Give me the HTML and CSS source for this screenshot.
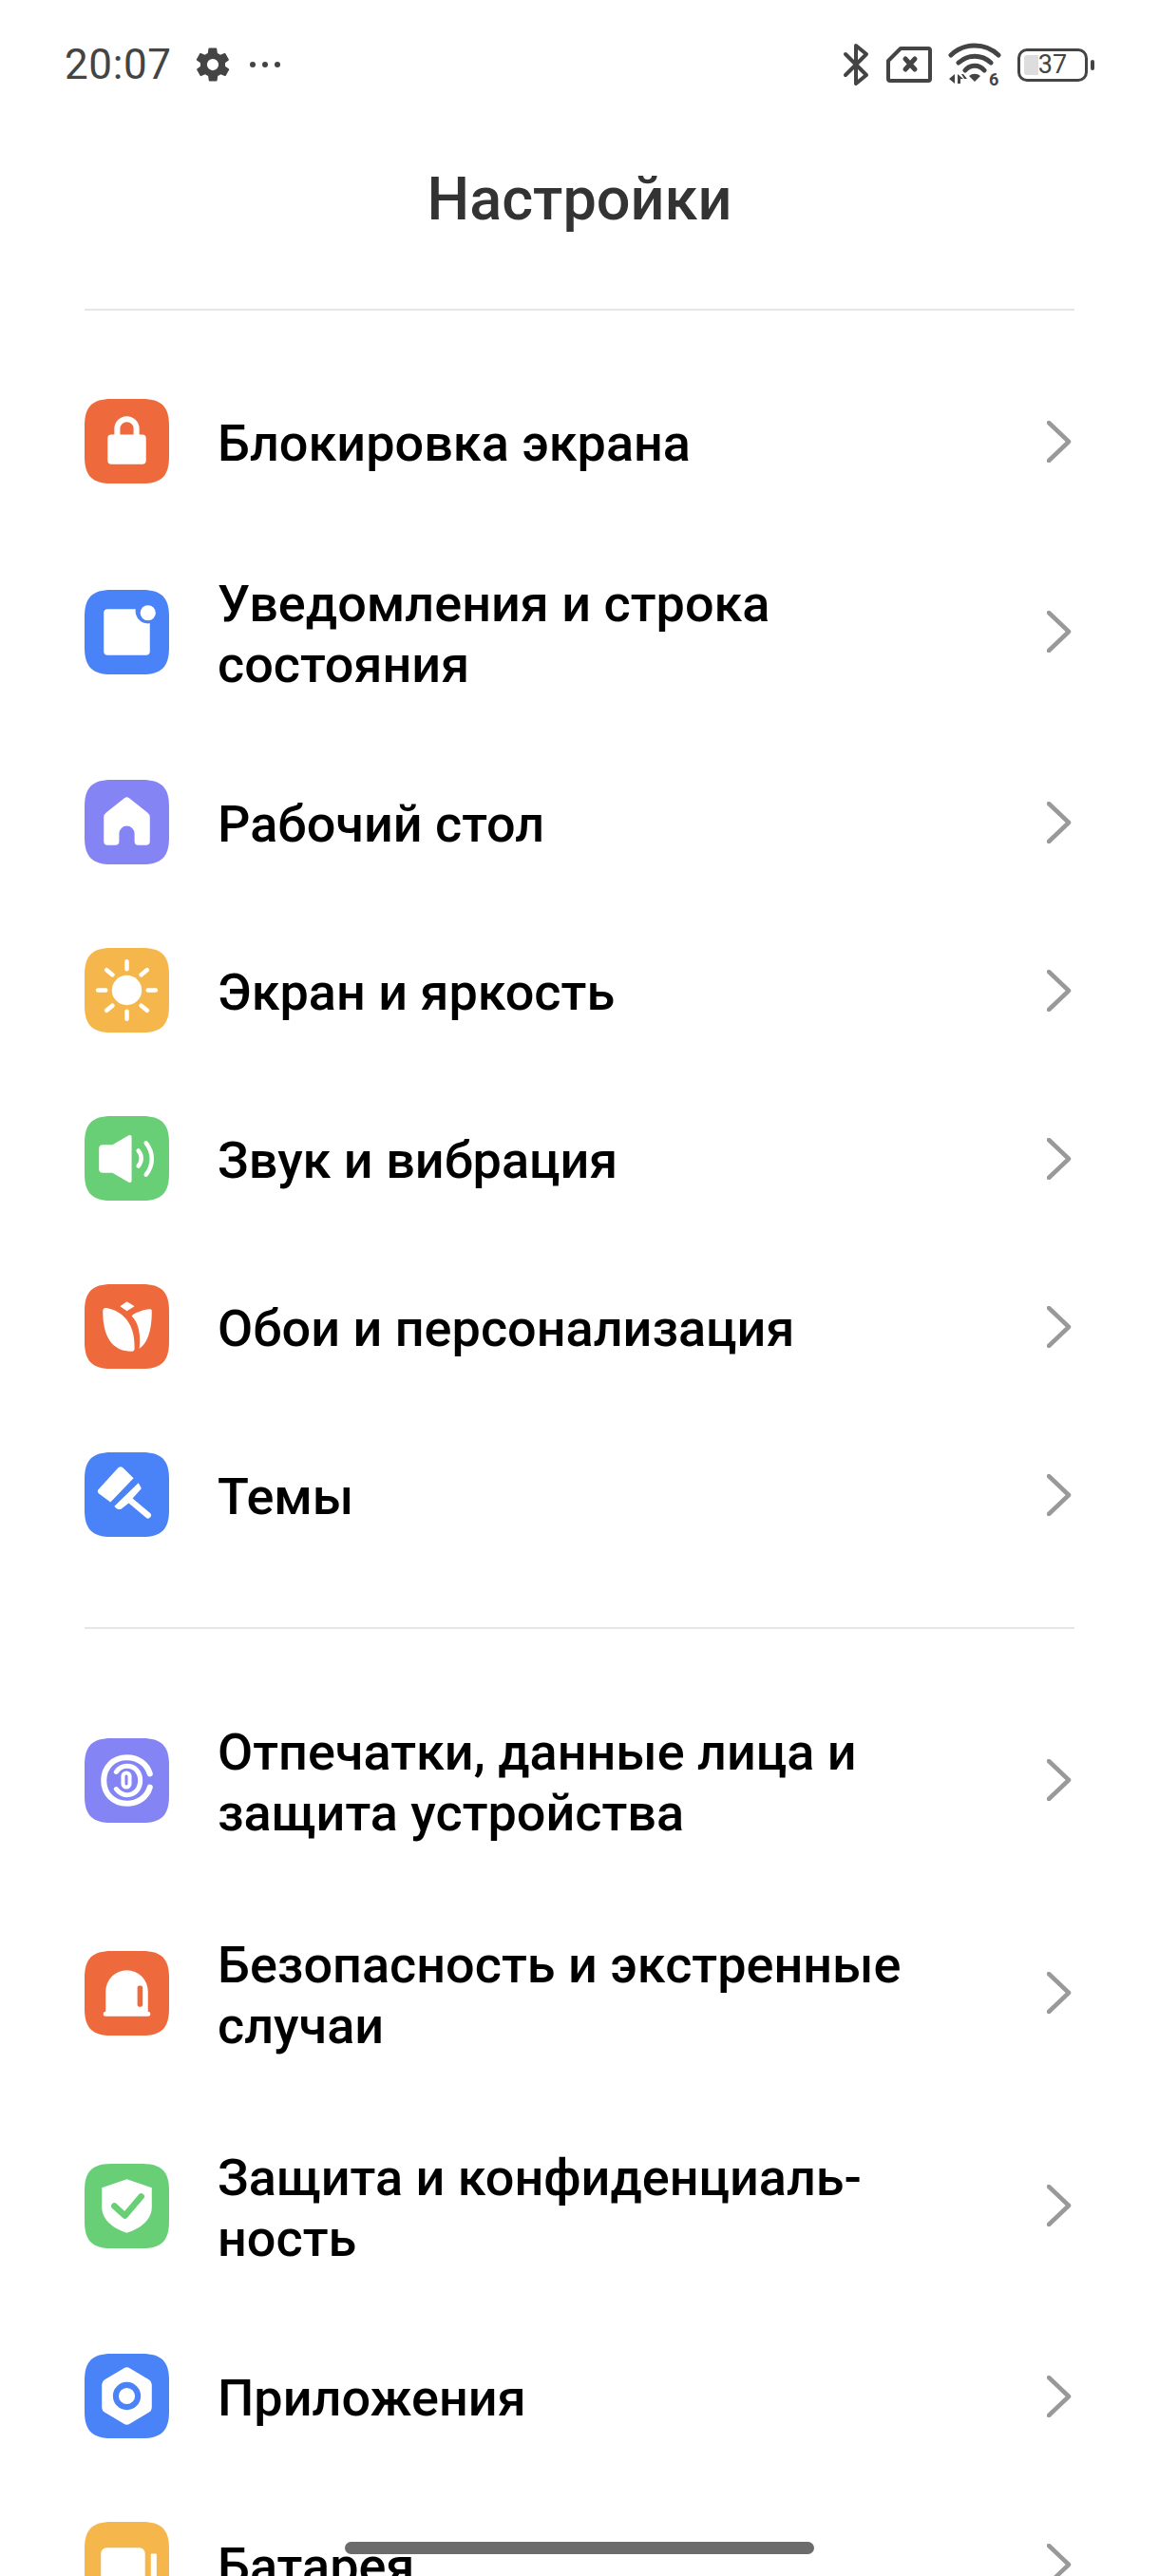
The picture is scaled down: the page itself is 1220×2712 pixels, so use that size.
FILE: index.html
```html
<!DOCTYPE html>
<html lang="ru">
<head>
<meta charset="UTF-8">
<title>Настройки</title>
<link rel="stylesheet" href="styles.css">
</head>
<body>
<div class="screen">
    <div class="statusbar">
        <div class="status-left">
            <span class="clock">20:07</span>
            <svg class="st-gear" viewBox="0 0 24 24"><path d="M19.4 13a7.6 7.6 0 0 0 0-2l2.100-1.600a.5.5 0 0 0 .1-.6l-2-3.500a.5.5 0 0 0-.6-.2l-2.500 1a7.300 7.300 0 0 0-1.700-1l-.4-2.700a.5.5 0 0 0-.5-.4h-4a.5.5 0 0 0-.5.4l-.4 2.700a7.300 7.300 0 0 0-1.700 1l-2.500-1a.5.5 0 0 0-.6.2l-2 3.500a.5.5 0 0 0 .1.6L4.600 11a7.600 7.600 0 0 0 0 2l-2.100 1.600a.5.5 0 0 0-.1.6l2 3.500c.1.2.4.3.6.2l2.500-1c.5.4 1.100.7 1.700 1l.4 2.700c0 .2.2.4.5.4h4c.3 0 .5-.2.5-.4l.4-2.700c.6-.3 1.200-.6 1.700-1l2.500 1c.2.1.5 0 .6-.2l2-3.500a.5.5 0 0 0-.1-.6zM12 15.500a3.500 3.500 0 1 1 0-7 3.500 3.500 0 0 1 0 7z"/></svg>
            <svg class="st-dots" viewBox="0 0 34 8"><circle cx="4" cy="4" r="3"/><circle cx="17" cy="4" r="3"/><circle cx="30" cy="4" r="3"/></svg>
        </div>
        <div class="status-right">
            <svg class="st-bt" viewBox="0 0 28 46"><path d="M3 12l22 22-11 9V3l11 9L3 34" fill="none" stroke="#444" stroke-width="4" stroke-linecap="round" stroke-linejoin="round"/></svg>
            <svg class="st-sim" viewBox="0 0 48 38"><path d="M15 2h29a2 2 0 0 1 2 2v30a2 2 0 0 1-2 2H4a2 2 0 0 1-2-2V15z" fill="none" stroke="#444" stroke-width="4" stroke-linejoin="round"/><path d="M20 13l10 11M30 13L20 24" fill="none" stroke="#444" stroke-width="5" stroke-linecap="round"/></svg>
            <svg class="st-wifi" viewBox="0 0 56 46"><path d="M3 13a36 36 0 0 1 50 0" fill="none" stroke="#444" stroke-width="5" stroke-linecap="round"/><path d="M11 21a25 25 0 0 1 34 0" fill="none" stroke="#444" stroke-width="5" stroke-linecap="round"/><path d="M18 29a13 13 0 0 1 20 0" fill="none" stroke="#444" stroke-width="5" stroke-linecap="round"/><path d="M22 35a9 9 0 0 1 12 0l-6 6z"/><path d="M7 33v10l-6-5zM10 33l6 5h-3v5h-3zM14 33h2l4 5h-3z"/><text x="43" y="45" class="wifi-gen">6</text></svg>
            <div class="battery">
                <div class="battery-body">
                    <div class="battery-fill"></div>
                    <span class="battery-num">37</span>
                </div>
                <div class="battery-nub"></div>
            </div>
        </div>
    </div>

    <h1 class="title">Настройки</h1>

    <div class="group">
        <div class="row">
            <svg class="icon" viewBox="0 0 88 88"><path class="ic-orange" d="M28 0h32c20 0 28 8 28 28v32c0 20-8 28-28 28H28C8 88 0 80 0 60V28C0 8 8 0 28 0z"/><path fill="#fff" d="M31 37v-6a13 13 0 0 1 26 0v6h3a4 4 0 0 1 4 4v23a4 4 0 0 1-4 4H28a4 4 0 0 1-4-4V41a4 4 0 0 1 4-4zm6 0h14v-6a7 7 0 0 0-14 0z"/></svg>
            <div class="row-text">Блокировка экрана</div>
            <svg class="arrow" viewBox="0 0 29 44"><path d="M2 2l21 20L2 42"/></svg>
        </div>
        <div class="row row-two">
            <svg class="icon" viewBox="0 0 88 88"><path class="ic-blue" d="M28 0h32c20 0 28 8 28 28v32c0 20-8 28-28 28H28C8 88 0 80 0 60V28C0 8 8 0 28 0z"/><rect x="20" y="20" width="48" height="48" rx="4" fill="#fff"/><circle cx="66" cy="22" r="13" fill="#4a82f7"/><circle cx="66" cy="24" r="8" fill="#fff"/></svg>
            <div class="row-text">Уведомления и строка<br>состояния</div>
            <svg class="arrow" viewBox="0 0 29 44"><path d="M2 2l21 20L2 42"/></svg>
        </div>
        <div class="row">
            <svg class="icon" viewBox="0 0 88 88"><path class="ic-violet" d="M28 0h32c20 0 28 8 28 28v32c0 20-8 28-28 28H28C8 88 0 80 0 60V28C0 8 8 0 28 0z"/><path fill="#fff" d="M41.500 19a4 4 0 0 1 5 0l19 15a6 6 0 0 1 2.500 5v25a4 4 0 0 1-4 4H56a4 4 0 0 1-4-4V56a8 8 0 0 0-16 0v8a4 4 0 0 1-4 4h-8a4 4 0 0 1-4-4V39a6 6 0 0 1 2.500-5z"/></svg>
            <div class="row-text">Рабочий стол</div>
            <svg class="arrow" viewBox="0 0 29 44"><path d="M2 2l21 20L2 42"/></svg>
        </div>
        <div class="row">
            <svg class="icon" viewBox="0 0 88 88"><path class="ic-yellow" d="M28 0h32c20 0 28 8 28 28v32c0 20-8 28-28 28H28C8 88 0 80 0 60V28C0 8 8 0 28 0z"/><circle cx="44" cy="44" r="15.500" fill="#fff"/><path fill="none" stroke="#fff" stroke-width="4.500" stroke-linecap="round" d="M44 14v8M44 66v8M14 44h8M66 44h8M23 23l6 5M59 60l6 5M65 23l-6 5M29 60l-6 5"/></svg>
            <div class="row-text">Экран и яркость</div>
            <svg class="arrow" viewBox="0 0 29 44"><path d="M2 2l21 20L2 42"/></svg>
        </div>
        <div class="row">
            <svg class="icon" viewBox="0 0 88 88"><path class="ic-green" d="M28 0h32c20 0 28 8 28 28v32c0 20-8 28-28 28H28C8 88 0 80 0 60V28C0 8 8 0 28 0z"/><path fill="#fff" d="M15 34a4 4 0 0 1 4-4h10l17-10a2 2 0 0 1 3 2v45a2 2 0 0 1-3 2L29 59H19a4 4 0 0 1-4-4z"/><path fill="none" stroke="#fff" stroke-width="4.500" stroke-linecap="round" d="M56 36c4 5 4 11 0 16M64 28c8 10 8 23 0 33"/></svg>
            <div class="row-text">Звук и вибрация</div>
            <svg class="arrow" viewBox="0 0 29 44"><path d="M2 2l21 20L2 42"/></svg>
        </div>
        <div class="row">
            <svg class="icon" viewBox="0 0 88 88"><path class="ic-orange" d="M28 0h32c20 0 28 8 28 28v32c0 20-8 28-28 28H28C8 88 0 80 0 60V28C0 8 8 0 28 0z"/><path fill="#fff" d="M44 18l8 5-8 5-7-5zM19 28c0-3 2-4 5-3 14 3 29 14 28 42 0 2-1 3-3 3-20 0-30-15-30-42zM56 29c4-2 9-3 12-3 2 0 2 1 2 3 0 20-5 33-13 38 2-14-1-28-8-34 2-2 4-3 7-4z"/></svg>
            <div class="row-text">Обои и персонализация</div>
            <svg class="arrow" viewBox="0 0 29 44"><path d="M2 2l21 20L2 42"/></svg>
        </div>
        <div class="row">
            <svg class="icon" viewBox="0 0 88 88"><path class="ic-blue" d="M28 0h32c20 0 28 8 28 28v32c0 20-8 28-28 28H28C8 88 0 80 0 60V28C0 8 8 0 28 0z"/><path fill="#fff" d="M35 16a4 4 0 0 1 5 0l11 11-24 25-12-9a3 3 0 0 1 0-5zM56 32l2 3a3 3 0 0 1 0 4l-8 9 18 15a3 3 0 0 1-4 5L46 53l-8 6c-2 1-5 0-7-3z"/></svg>
            <div class="row-text">Темы</div>
            <svg class="arrow" viewBox="0 0 29 44"><path d="M2 2l21 20L2 42"/></svg>
        </div>
    </div>

    <div class="group">
        <div class="row row-two">
            <svg class="icon" viewBox="0 0 88 88"><path class="ic-violet" d="M28 0h32c20 0 28 8 28 28v32c0 20-8 28-28 28H28C8 88 0 80 0 60V28C0 8 8 0 28 0z"/><g fill="none" stroke="#fff" stroke-linecap="round"><path stroke-width="6" d="M68 37c-3-10-12-17-24-17-14 0-24 10-24 24s10 24 24 24c12 0 21-7 24-17"/><path stroke-width="5" d="M33 35c3-4 7-6 11-6 9 0 14 7 14 15s-5 15-14 15c-4 0-8-2-11-6"/><rect x="40" y="36" width="7" height="15" rx="3.500" stroke-width="4"/></g></svg>
            <div class="row-text">Отпечатки, данные лица и<br>защита устройства</div>
            <svg class="arrow" viewBox="0 0 29 44"><path d="M2 2l21 20L2 42"/></svg>
        </div>
        <div class="row row-two">
            <svg class="icon" viewBox="0 0 88 88"><path class="ic-orange" d="M28 0h32c20 0 28 8 28 28v32c0 20-8 28-28 28H28C8 88 0 80 0 60V28C0 8 8 0 28 0z"/><path fill="#fff" d="M22 42a22 22 0 0 1 44 0v21h0a2.500 2.500 0 0 1 0 5H22a2.500 2.500 0 0 1 0-5z"/><rect x="55" y="36" width="5.500" height="22" rx="2" fill="#ee6a3c"/></svg>
            <div class="row-text">Безопасность и экстренные<br>случаи</div>
            <svg class="arrow" viewBox="0 0 29 44"><path d="M2 2l21 20L2 42"/></svg>
        </div>
        <div class="row row-two">
            <svg class="icon" viewBox="0 0 88 88"><path class="ic-green" d="M28 0h32c20 0 28 8 28 28v32c0 20-8 28-28 28H28C8 88 0 80 0 60V28C0 8 8 0 28 0z"/><path fill="#fff" d="M44 16l26 9v20c0 13-11 22-26 27-15-5-26-14-26-27V25z"/><path fill="none" stroke="#68cf76" stroke-width="6.500" stroke-linecap="round" stroke-linejoin="round" d="M31 44l11 10 17-20"/></svg>
            <div class="row-text">Защита и конфиденциаль-<br>ность</div>
            <svg class="arrow" viewBox="0 0 29 44"><path d="M2 2l21 20L2 42"/></svg>
        </div>
        <div class="row">
            <svg class="icon" viewBox="0 0 88 88"><path class="ic-blue" d="M28 0h32c20 0 28 8 28 28v32c0 20-8 28-28 28H28C8 88 0 80 0 60V28C0 8 8 0 28 0z"/><path fill="#fff" d="M41 15a6 6 0 0 1 6 0l20 12a6 6 0 0 1 3 5v24a6 6 0 0 1-3 5L47 73a6 6 0 0 1-6 0L21 61a6 6 0 0 1-3-5V32a6 6 0 0 1 3-5z"/><circle cx="44" cy="44" r="11.500" fill="none" stroke="#4a82f7" stroke-width="6"/></svg>
            <div class="row-text">Приложения</div>
            <svg class="arrow" viewBox="0 0 29 44"><path d="M2 2l21 20L2 42"/></svg>
        </div>
        <div class="row">
            <svg class="icon" viewBox="0 0 88 88"><path class="ic-yellow" d="M28 0h32c20 0 28 8 28 28v32c0 20-8 28-28 28H28C8 88 0 80 0 60V28C0 8 8 0 28 0z"/><rect x="17" y="27" width="46" height="38" rx="6" fill="#fff"/><rect x="69" y="33" width="6" height="26" rx="1" fill="#fff"/></svg>
            <div class="row-text">Батарея</div>
            <svg class="arrow" viewBox="0 0 29 44"><path d="M2 2l21 20L2 42"/></svg>
        </div>
    </div>

    <div class="home-bar"></div>
</div>
</body>
</html>
```

FILE: styles.css
```css
html, body{
    margin: 0;
    padding: 0;
    background: #fff;
}

.screen{
    position: relative;
    width: 1220px;
    height: 2712px;
    overflow: hidden;
    font-family: "Roboto", "Noto Sans", sans-serif;
}

/* status bar */
.statusbar{
    display: flex;
    justify-content: space-between;
    align-items: center;
    height: 42px;
    padding: 47px 68px 0 68px;
    color: #444;
}
.status-left, .status-right{
    display: flex;
    align-items: center;
}
.clock{
    font-size: 44px;
    line-height: 42px;
    letter-spacing: .6px;
}
.st-gear{
    width: 42px;
    height: 42px;
    margin-left: 22px;
    fill: #444;
}
.st-dots{
    width: 34px;
    height: 8px;
    margin-left: 17px;
    fill: #444;
}
.st-bt{
    width: 28px;
    height: 46px;
}
.st-sim{
    width: 48px;
    height: 38px;
    margin-left: 18px;
}
.st-wifi{
    width: 56px;
    height: 46px;
    margin-left: 17px;
    fill: #444;
}
.wifi-gen{
    font-size: 18px;
    font-weight: 700;
    fill: #444;
}
.battery{
    display: flex;
    align-items: center;
    margin-left: 17px;
}
.battery-body{
    position: relative;
    display: flex;
    align-items: center;
    justify-content: center;
    box-sizing: border-box;
    width: 74px;
    height: 35px;
    border: 3px solid #444;
    border-radius: 10px;
}
.battery-fill{
    position: absolute;
    left: 4px;
    top: 4px;
    bottom: 4px;
    width: 15px;
    background: #ddd;
    border-radius: 3px 0 0 3px;
}
.battery-num{
    position: relative;
    font-size: 27px;
    line-height: 29px;
}
.battery-nub{
    width: 4px;
    height: 11px;
    margin-left: 3px;
    background: #444;
    border-radius: 2px;
}

/* title */
.title{
    margin: 0;
    padding-top: 86px;
    height: 236px;
    text-align: center;
    font-size: 63px;
    line-height: 70px;
    font-weight: 500;
    color: #333;
    box-sizing: border-box;
}

/* list */
.group{
    margin: 0 89px;
    padding: 49px 0 51px;
    border-top: 2px solid #e6e6e6;
}
.group + .group{
    padding-top: 47px;
}
.row{
    display: flex;
    align-items: center;
    height: 177px;
}
.row-two{
    height: 224px;
}
.icon{
    flex: none;
    width: 89px;
    height: 89px;
}
.row-text{
    flex: 1;
    margin-left: 51px;
    padding-top: 5px;
    font-size: 54px;
    line-height: 64px;
    font-weight: 500;
    color: #000;
}
.arrow{
    flex: none;
    width: 29px;
    height: 44px;
    fill: none;
    stroke: #999;
    stroke-width: 4.500;
    stroke-linecap: round;
    stroke-linejoin: round;
}

.ic-orange{ fill: #ee6a3c; }
.ic-blue{ fill: #4a82f7; }
.ic-violet{ fill: #8484f4; }
.ic-yellow{ fill: #f5b74c; }
.ic-green{ fill: #68cf76; }

.home-bar{
    position: absolute;
    left: 363px;
    top: 2676px;
    width: 494px;
    height: 13px;
    background: #6b6b6b;
    border-radius: 7px;
}
```
